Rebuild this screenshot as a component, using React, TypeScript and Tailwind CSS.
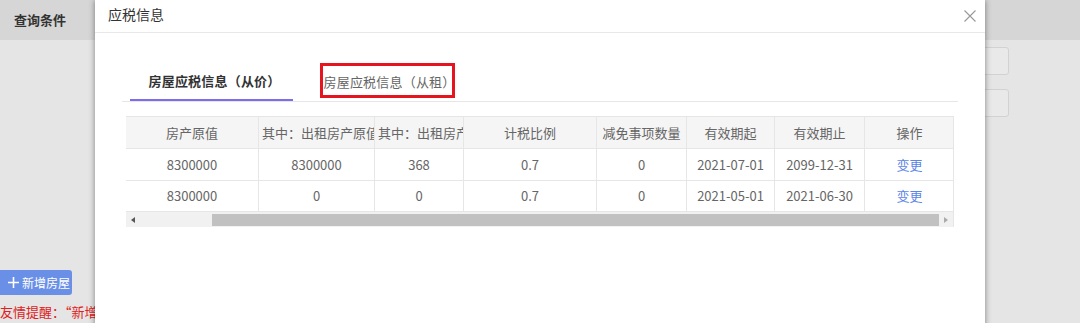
import React from 'react';

const font = '"Noto Sans CJK SC", "Noto Sans", sans-serif';

const columns = [
  { title: '房产原值', width: 'w-[133px]' },
  { title: '其中：出租房产原值', width: 'w-[116px]' },
  { title: '其中：出租房产面积', width: 'w-[89px]' },
  { title: '计税比例', width: 'w-[133px]' },
  { title: '减免事项数量', width: 'w-[90px]' },
  { title: '有效期起', width: 'w-[88px]' },
  { title: '有效期止', width: 'w-[90px]' },
  { title: '操作', width: 'w-[89px]' },
];

const rows = [
  ['8300000', '8300000', '368', '0.7', '0', '2021-07-01', '2099-12-31'],
  ['8300000', '0', '0', '0.7', '0', '2021-05-01', '2021-06-30'],
];

const Cell = ({ width, children, last }: { width: string; children: React.ReactNode; last?: boolean }) => (
  <div
    className={`${width} shrink-0 flex items-center justify-center overflow-hidden whitespace-nowrap ${
      last ? '' : 'border-r border-[#e6e6e6]'
    }`}
  >
    {children}
  </div>
);

const TaxTable = () => (
  <div className="mt-[14px] mx-[4px] border-t border-r border-[#e6e6e6] text-[13px] text-[#666]">
    <div className="flex h-[32px] bg-[#f5f5f5] border-b border-[#e6e6e6]">
      {columns.map((c, i) => (
        <Cell key={i} width={c.width} last={i === columns.length - 1}>
          <span className={i === 1 || i === 2 ? 'w-full pl-[3px] text-left' : ''}>{c.title}</span>
        </Cell>
      ))}
    </div>
    {rows.map((r, ri) => (
      <div key={ri} className={`flex ${ri === 0 ? 'h-[32px]' : 'h-[31px]'} border-b border-[#e6e6e6]`}>
        {r.map((v, i) => (
          <Cell key={i} width={columns[i].width}>
            {v}
          </Cell>
        ))}
        <Cell width={columns[7].width} last>
          <span className="text-[#5b86e8]">变更</span>
        </Cell>
      </div>
    ))}
    {/* horizontal scrollbar */}
    <div className="flex items-center h-[15px] bg-[#f1f1f1]">
      <div className="w-[14px] flex items-center justify-center">
        <div className="w-0 h-0 border-y-[3px] border-y-transparent border-r-[4px] border-r-[#555]" />
      </div>
      <div className="ml-[72px] h-[12px] w-[727px] bg-[#c1c1c1]" />
      <div className="flex-1 flex items-center justify-center">
        <div className="w-0 h-0 border-y-[3px] border-y-transparent border-l-[4px] border-l-[#aaa]" />
      </div>
    </div>
  </div>
);

const Modal = () => (
  <div className="absolute left-[95px] top-0 w-[890px] h-[330px] bg-white shadow-[0_0_6px_rgba(0,0,0,0.45)]">
    <div className="h-[33px] border-b border-[#e8e8e8] flex items-center justify-between pl-[13px] pr-[9px] pb-[3px]">
      <span className="text-[14px] text-[#333]">应税信息</span>
      <svg width="12" height="12" viewBox="0 0 12 12" className="mt-[3px]">
        <path d="M0.5 0.5 L11.5 11.5 M11.5 0.5 L0.5 11.5" stroke="#999" strokeWidth="1.1" fill="none" />
      </svg>
    </div>
    <div className="px-[27px] pt-[29px]">
      <div className="flex border-b border-[#e6e6e6] pl-[8px] gap-[12px] text-[13px]">
        <div className="h-[39px] w-[163px] flex items-center justify-center pl-[6px] border-b-2 border-[#7b6cf2] font-bold text-[#333] tracking-[0.2px]">
          房屋应税信息（从价）
        </div>
        <div className="relative h-[39px] w-[163px] flex items-center justify-center pl-[6px] text-[#666] tracking-[0.2px]">
          房屋应税信息（从租）
          <span className="absolute left-[15px] right-[13px] top-[1px] bottom-[3px] border-[3px] border-[#e6141e]" />
        </div>
      </div>
      <TaxTable />
    </div>
  </div>
);

export default function App() {
  return (
    <div className="relative w-[1080px] h-[323px] overflow-hidden bg-[#e5e5e5]" style={{ fontFamily: font }}>
      <div className="h-[40px] bg-[#d6d6d6] flex items-center pl-[14px]">
        <span className="text-[13px] font-bold text-[#333]">查询条件</span>
      </div>
      <div className="flex flex-col items-end pr-[71px] pt-[7px] gap-[14px]">
        <div className="w-[300px] h-[28px] rounded-[3px] border border-[#d2d2d2] bg-[#e9e9e9]" />
        <div className="w-[300px] h-[28px] rounded-[3px] border border-[#d2d2d2] bg-[#e9e9e9]" />
      </div>
      <div className="mt-[153px] w-[72px] h-[25px] rounded-r-[3px] bg-[#6a8fe6] flex items-center pl-[8px] gap-[3px] text-white text-[12px]">
        <svg width="11" height="11" viewBox="0 0 11 11">
          <path d="M5.5 0 V11 M0 5.5 H11" stroke="#fff" strokeWidth="1.6" />
        </svg>
        <span>新增房屋</span>
      </div>
      <div className="mt-[9px] text-[13px] leading-[16px] text-[#e02020] whitespace-nowrap">友情提醒：“新增房屋后请及时申报</div>
      <Modal />
    </div>
  );
}
